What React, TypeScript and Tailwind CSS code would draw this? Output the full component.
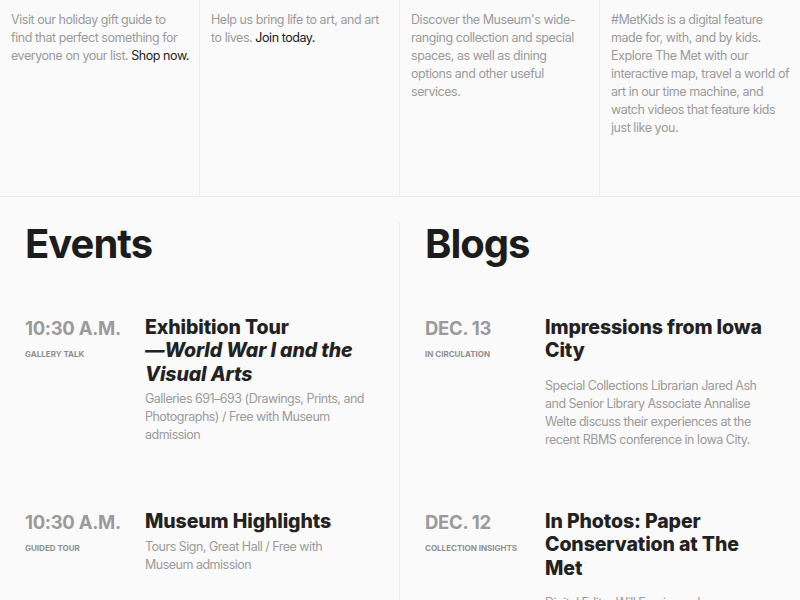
import React from "react";

type Promo = { body: string; link?: string };

const promos: Promo[] = [
  {
    body: "Visit our holiday gift guide to find that perfect something for everyone on your list.",
    link: "Shop now.",
  },
  { body: "Help us bring life to art, and art to lives.", link: "Join today." },
  {
    body: "Discover the Museum's wide-ranging collection and special spaces, as well as dining options and other useful services.",
  },
  {
    body: "#MetKids is a digital feature made for, with, and by kids. Explore The Met with our interactive map, travel a world of art in our time machine, and watch videos that feature kids just like you.",
  },
];

type Item = {
  when: string;
  tag: string;
  title: React.ReactNode;
  text: string;
};

const events: Item[] = [
  {
    when: "10:30 A.M.",
    tag: "Gallery Talk",
    title: (
      <>
        Exhibition Tour <i>{"—\u2060World War I and the Visual Arts"}</i>
      </>
    ),
    text: "Galleries 691–693 (Drawings, Prints, and Photographs) / Free with Museum admission",
  },
  {
    when: "10:30 A.M.",
    tag: "Guided Tour",
    title: "Museum Highlights",
    text: "Tours Sign, Great Hall / Free with Museum admission",
  },
];

const blogs: Item[] = [
  {
    when: "DEC. 13",
    tag: "In Circulation",
    title: "Impressions from Iowa City",
    text: "Special Collections Librarian Jared Ash and Senior Library Associate Annalise Welte discuss their experiences at the recent RBMS conference in Iowa City.",
  },
  {
    when: "DEC. 12",
    tag: "Collection Insights",
    title: "In Photos: Paper Conservation at The Met",
    text: "Digital Editor Will Furnier and conservators take a closer look at works on paper in the Museum's care.",
  },
];

function Row({ item, textGap }: { item: Item; textGap: string }) {
  return (
    <div className="flex">
      <div className="w-[120px] shrink-0 pt-[1px]">
        <div className="text-[18.5px] font-bold leading-[23px] text-[#9a9a9a] tracking-[-0.3px]">
          {item.when}
        </div>
        <div className="mt-[9px] text-[8px] font-bold uppercase leading-[10px] text-[#8f8f8f]">
          {item.tag}
        </div>
      </div>
      <div className="w-[221px]">
        <h3 className="text-[19.5px] font-extrabold leading-[23.4px] text-[#222] tracking-[-0.1px]">
          {item.title}
        </h3>
        <p
          className={`${textGap} text-[12.5px] leading-[18px] text-[#9a9a9a] tracking-[-0.5px]`}
        >
          {item.text}
        </p>
      </div>
    </div>
  );
}

export default function App() {
  return (
    <div
      className="w-[800px] h-[600px] overflow-hidden bg-[#fafafa]"
      style={{ fontFamily: "Inter, 'Noto Sans', sans-serif" }}
    >
      <div className="grid grid-cols-4 h-[197px] border-b border-[#ebebeb]">
        {promos.map((p, i) => (
          <div
            key={i}
            className="border-r border-[#ebebeb] last:border-r-0 pl-[11px] pr-[10px] pt-[11px] text-[12.5px] leading-[18px] text-[#9a9a9a] tracking-[-0.45px]"
          >
            {p.body}
            {p.link && (
              <>
                {" "}
                <span className="text-[#222]">{p.link}</span>
              </>
            )}
          </div>
        ))}
      </div>

      <div className="grid grid-cols-2 pt-[25px]">
        <section className="border-r border-[#ebebeb] pl-[25px] h-[400px]">
          <h2 className="mt-[2px] text-[40px] font-bold leading-[40px] text-[#1c1c1c] tracking-[-1px]">
            Events
          </h2>
          <div className="mt-[52px] flex flex-col gap-[66px]">
            {events.map((e, i) => (
              <Row key={i} item={e} textGap="mt-[4px]" />
            ))}
          </div>
        </section>
        <section className="pl-[25px]">
          <h2 className="mt-[2px] text-[40px] font-bold leading-[40px] text-[#1c1c1c] tracking-[-1px]">
            Blogs
          </h2>
          <div className="mt-[52px] flex flex-col gap-[61px]">
            {blogs.map((b, i) => (
              <Row key={i} item={b} textGap="mt-[14px]" />
            ))}
          </div>
        </section>
      </div>
    </div>
  );
}
